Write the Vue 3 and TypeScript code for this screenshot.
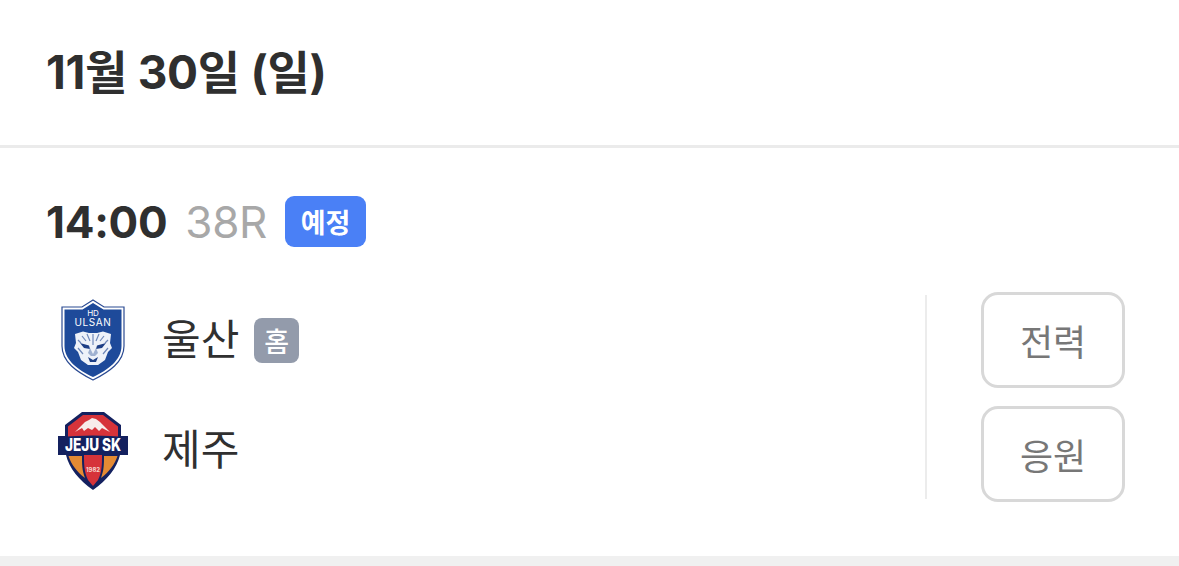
<script setup lang="ts">
const actions: string[] = ['전력', '응원']
</script>

<template>
  <div class="page">
    <header class="date-head"><h1>11월 30일 (일)</h1></header>
    <section class="match">
      <div class="meta">
        <span class="time">14:00</span>
        <span class="round">38R</span>
        <span class="status">예정</span>
      </div>
      <div class="body">
        <div class="teams">
          <div class="team">
            <svg class="logo" viewBox="0 0 80 84" width="80" height="84">
              <path d="M40 2 L51 9 L71 9 L71 48 C71 64 56 74 40 82 C24 74 9 64 9 48 L9 9 L29 9 Z" fill="#fff" stroke="#2a4a92" stroke-width="1.2"/>
              <path d="M40 5 L50.500 11.500 L68.500 11.500 L68.500 48 C68.500 62 55 72 40 79 C25 72 11.500 62 11.500 48 L11.500 11.500 L29.500 11.500 Z" fill="#1e4a9a"/>
              <text x="40" y="18" text-anchor="middle" class="ul1">HD</text>
              <text x="40" y="28" text-anchor="middle" class="ul2">ULSAN</text>
              <path d="M22 36 L30 33.500 L36 35 H44 L50 33.500 L58 36 L57 45 L59 50 L55 54 L52 62 L45 67 H35 L28 62 L25 54 L21 50 L23 45 Z" fill="#eef2f9"/>
              <path d="M27 45 L36 47.500 L37 51 L31 50 Z M53 45 L44 47.500 L43 51 L49 50 Z" fill="#1e3f86"/>
              <path d="M40 36 V47 M34 36 L37 43 M46 36 L43 43 M29 38 L33 43 M51 38 L47 43 M25 50 L30 56 M55 50 L50 56 M28 45 L25 42 M52 45 L55 42" stroke="#6f88b9" stroke-width="1.200" fill="none"/>
              <path d="M37 50 L40 56 L43 50 L45 55 L42 58 H38 L35 55 Z" fill="#9fb1d1"/>
              <path d="M35 59 L40 62 L45 59 L43 64 H37 Z" fill="#1e3f86"/>
            </svg>
            <span class="name">울산</span>
            <span class="home">홈</span>
          </div>
          <div class="team">
            <svg class="logo" viewBox="0 0 80 84" width="80" height="84">
              <path d="M29 4 H51 L68 17 V28 H75 V47 H67 C64 60 54 72 40 82 C26 72 16 60 13 47 H5 V28 H12 V17 Z" fill="#14215f"/>
              <path d="M30 7 H50 L65 18.500 V29 H15 V18.500 Z" fill="#d6333a"/>
              <path d="M22 24 L32 14 L36 12 L39 10 L43 11 L47 14 L57 24 L49 20 L46 23 L42 19 L39 22 L35 20 L31 23 L29 20 Z" fill="#f7ecea"/>
              <path d="M6 29 Q40 26 74 29 V46 Q40 43 6 46 Z" fill="#14215f"/>
              <text transform="translate(40 43) scale(0.8 1)" text-anchor="middle" class="je">JEJU SK</text>
              <path d="M15.500 48 H29 C29 56 29 62 32 70 C24 64 18 56 15.500 48 Z" fill="#e48a33"/>
              <path d="M64.500 48 H51 C51 56 51 62 48 70 C56 64 62 56 64.500 48 Z" fill="#e48a33"/>
              <path d="M31 47 H49 C49 56 49 64 45 72 L40 78 L35 72 C31 64 31 56 31 47 Z" fill="#d6333a"/>
              <text x="40" y="64" text-anchor="middle" class="yr">1982</text>
            </svg>
            <span class="name">제주</span>
          </div>
        </div>
        <div class="actions">
          <button v-for="a in actions" :key="a" type="button" class="action">{{ a }}</button>
        </div>
      </div>
    </section>
    <div class="band"></div>
  </div>
</template>

<style>
html, body { background: #fff; }
</style>

<style scoped>
.page {
  width: 1179px;
  height: 566px;
  display: flex;
  flex-direction: column;
  background: #fff;
  color: #2f2f2f;
  font-family: Inter, "Noto Sans CJK KR", sans-serif;
  overflow: hidden;
}
.date-head {
  flex: none;
  height: 148px;
  box-sizing: border-box;
  padding: 0 46px 1px;
  display: flex;
  align-items: center;
  border-bottom: 3px solid #ebebeb;
}
h1 { margin: 0; font-size: 46px; line-height: 52px; font-weight: 700; letter-spacing: -0.3px; }
.match { flex: 1; padding: 48px 54px 0 46px; }
.meta { display: flex; align-items: center; height: 51px; }
.time { font-size: 44px; font-weight: 700; letter-spacing: -0.3px; }
.round { margin-left: 18px; font-size: 44px; color: #a8a8a8; letter-spacing: -0.3px; }
.status {
  margin-left: 18px;
  width: 81px;
  height: 51px;
  border-radius: 9px;
  background: #4a80f6;
  color: #fff;
  font-size: 27px;
  font-weight: 600;
  display: flex;
  align-items: center;
  justify-content: center;
}
.body { display: flex; margin-top: 45px; }
.teams {
  flex: 1;
  display: flex;
  flex-direction: column;
  gap: 26px;
  height: 204px;
  box-sizing: border-box;
  margin-top: 3px;
  padding-top: 3px;
  border-right: 2px solid #ececec;
}
.team { display: flex; align-items: center; height: 84px; }
.logo { flex: none; margin-left: 7px; }
.name { margin-left: 29px; font-size: 42px; color: #303030; line-height: 52px; }
.home {
  margin-left: 15px;
  width: 45px;
  height: 45px;
  border-radius: 8px;
  background: #939bab;
  color: #fff;
  font-size: 27px;
  font-weight: 500;
  display: flex;
  align-items: center;
  justify-content: center;
}
.actions { margin-left: 54px; display: flex; flex-direction: column; gap: 18px; }
.action {
  width: 144px;
  height: 96px;
  box-sizing: border-box;
  background: #fff;
  border: 3px solid #d8d8d8;
  border-radius: 17px;
  color: #777;
  font: 400 36px Inter, "Noto Sans CJK KR", sans-serif;
}
.band { height: 10px; background: #f0f0f0; flex: none; }
.ul1 { font: 400 8px Inter, sans-serif; fill: #fff; }
.ul2 { font: 400 10px Inter, sans-serif; fill: #fff; letter-spacing: 0.6px; }
.je { font: 800 17px Inter, sans-serif; fill: #fff; }
.yr { font: 700 6px Inter, sans-serif; fill: #f5d6cf; }
</style>
